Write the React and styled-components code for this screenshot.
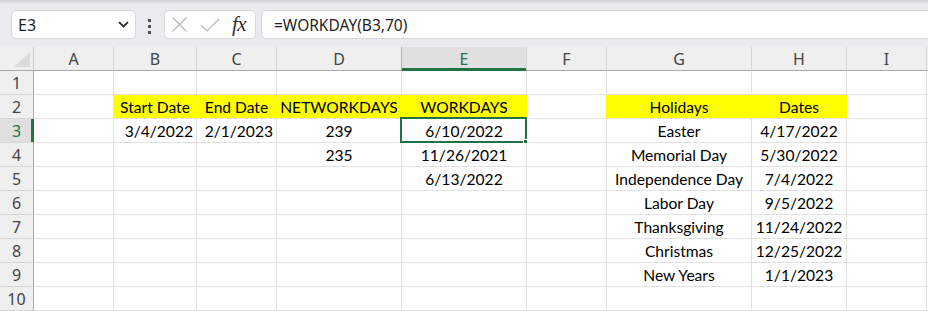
import React from 'react'
import styled, { createGlobalStyle } from 'styled-components'

const GlobalStyle = createGlobalStyle`
  body {
    margin: 0;
    background: #fff;
    overflow: hidden;
  }
`

const GREEN = '#217346'
const YELLOW = '#ffff00'
const UI_FONT = `"Noto Sans", "Open Sans", sans-serif`
const CELL_FONT = `Lato, "Noto Sans", sans-serif`

const Page = styled.div`
  width: 928px;
  height: 311px;
  overflow: hidden;
  display: flex;
  flex-direction: column;
`

const FormulaArea = styled.div`
  height: 48px;
  box-sizing: border-box;
  padding: 10px 0 0 11px;
  background: linear-gradient(#d4d6d9 0, #e9ebee 5px, #e9ebee 100%);
  display: flex;
  align-items: flex-start;
  overflow: hidden;
`

const NameBox = styled.div`
  width: 125px;
  height: 29px;
  box-sizing: border-box;
  background: #fff;
  border: 1px solid #d8d8d8;
  border-radius: 5px;
  padding: 0 6px 0 6px;
  display: flex;
  align-items: center;
  justify-content: space-between;
  font-family: ${UI_FONT};
  font-size: 16px;
  color: #1f1f1f;
`

const Dots = styled.div`
  width: 3px;
  margin: 9px 13px 0 12px;
  display: flex;
  flex-direction: column;
  gap: 3px;
`

const Dot = styled.span`
  width: 3px;
  height: 3px;
  background: #505050;
`

const FuncBox = styled.div`
  width: 92px;
  height: 29px;
  box-sizing: border-box;
  background: #fff;
  border: 1px solid #d8d8d8;
  border-radius: 5px;
  display: flex;
  align-items: center;
  padding-left: 6px;
  gap: 12px;
`

const Fx = styled.span`
  font-family: "Liberation Serif", serif;
  font-style: italic;
  font-size: 21px;
  color: #303030;
  letter-spacing: -0.5px;
`

const FormulaInput = styled.div`
  flex: 1;
  height: 29px;
  margin-left: 5px;
  margin-right: -10px;
  box-sizing: border-box;
  background: #fff;
  border: 1px solid #d8d8d8;
  border-radius: 5px;
  padding-left: 12px;
  display: flex;
  align-items: center;
  font-family: ${UI_FONT};
  font-size: 15.5px;
  color: #1f1f1f;
`

const Sheet = styled.div`
  display: grid;
  grid-template-columns: 34px 80px 83px 80px 125px 125px 80px 145px 95px 80px 1fr;
  grid-auto-rows: 24px;
`

const Corner = styled.div`
  position: relative;
  background: #efefef;
  border-right: 1px solid #c6c6c6;
  border-bottom: 1px solid #a9a9a9;
`

const CornerMark = styled.div`
  position: absolute;
  right: 3px;
  bottom: 3px;
  width: 16px;
  height: 15px;
  background: #dadada;
  clip-path: polygon(100% 0, 100% 100%, 0 100%);
`

const ColHead = styled.div`
  background: ${p => (p.$active ? '#e0e0e0' : '#efefef')};
  border-right: 1px solid #d6d6d6;
  border-left: ${p => (p.$active ? '1px solid #b4b4b4' : 'none')};
  margin-left: ${p => (p.$active ? '-1px' : '0')};
  border-bottom: 1px solid ${p => (p.$active ? GREEN : '#a9a9a9')};
  box-shadow: ${p => (p.$active ? `inset 0 -2px 0 ${GREEN}` : 'none')};
  display: flex;
  align-items: center;
  justify-content: center;
  font-family: ${UI_FONT};
  font-size: 16px;
  color: ${p => (p.$active ? GREEN : '#444')};
`

const RowHead = styled.div`
  background: ${p => (p.$active ? '#e0e0e0' : '#efefef')};
  border-right: 1px solid ${p => (p.$active ? GREEN : '#a9a9a9')};
  box-shadow: ${p => (p.$active ? `inset -2px 0 0 ${GREEN}` : 'none')};
  border-bottom: 1px solid #d6d6d6;
  display: flex;
  align-items: center;
  justify-content: center;
  font-family: ${UI_FONT};
  font-size: 16px;
  color: ${p => (p.$active ? GREEN : '#444')};
`

const Cell = styled.div`
  position: relative;
  box-sizing: border-box;
  background: ${p => (p.$fill ? YELLOW : '#fff')};
  border-right: 1px solid ${p => (p.$edge ? YELLOW : '#e1e1e1')};
  border-bottom: 1px solid #e1e1e1;
  padding: 0 3px 1px 3px;
  display: flex;
  align-items: flex-end;
  justify-content: ${p => (p.$align === 'right' ? 'flex-end' : p.$align === 'center' ? 'center' : 'flex-start')};
  font-family: ${CELL_FONT};
  font-size: 15.6px;
  line-height: 19px;
  color: #000;
  white-space: nowrap;
`

const Selection = styled.div`
  position: absolute;
  left: -2px;
  top: -2px;
  right: -1px;
  bottom: -1px;
  border: 2px solid ${GREEN};
  pointer-events: none;
`

const Handle = styled.div`
  position: absolute;
  right: -5px;
  bottom: -5px;
  width: 5px;
  height: 5px;
  background: ${GREEN};
  border: 1px solid #fff;
`

const COLS = ['A', 'B', 'C', 'D', 'E', 'F', 'G', 'H', 'I']

// one entry per row: column letter -> [text, align, filled]
const DATA = {
  2: {
    B: ['Start Date', 'center', true],
    C: ['End Date', 'center', true],
    D: ['NETWORKDAYS', 'center', true],
    E: ['WORKDAYS', 'center', true],
    G: ['Holidays', 'center', true],
    H: ['Dates', 'center', true],
  },
  3: {
    B: ['3/4/2022', 'right'],
    C: ['2/1/2023', 'right'],
    D: ['239', 'center'],
    E: ['6/10/2022', 'center'],
    G: ['Easter', 'center'],
    H: ['4/17/2022', 'center'],
  },
  4: {
    D: ['235', 'center'],
    E: ['11/26/2021', 'center'],
    G: ['Memorial Day', 'center'],
    H: ['5/30/2022', 'center'],
  },
  5: {
    E: ['6/13/2022', 'center'],
    G: ['Independence Day', 'center'],
    H: ['7/4/2022', 'center'],
  },
  6: { G: ['Labor Day', 'center'], H: ['9/5/2022', 'center'] },
  7: { G: ['Thanksgiving', 'center'], H: ['11/24/2022', 'center'] },
  8: { G: ['Christmas', 'center'], H: ['12/25/2022', 'center'] },
  9: { G: ['New Years', 'center'], H: ['1/1/2023', 'center'] },
}

const Chevron = () => (
  <svg width="11" height="7" viewBox="0 0 11 7">
    <path d="M1 1.2 L5.5 5.5 L10 1.2" fill="none" stroke="#2b2b2b" strokeWidth="1.8" />
  </svg>
)

const CancelIcon = () => (
  <svg width="17" height="17" viewBox="0 0 17 17">
    <path d="M1.5 1.5 L15.5 15.5 M15.5 1.5 L1.5 15.5" stroke="#b8b8b8" strokeWidth="1.2" fill="none" />
  </svg>
)

const EnterIcon = () => (
  <svg width="20" height="14" viewBox="0 0 20 14">
    <path d="M1 7 L7 13 L19 1" stroke="#b8b8b8" strokeWidth="1.2" fill="none" />
  </svg>
)

const Row = ({ n }) => {
  const row = DATA[n] || {}
  return (
    <>
      <RowHead $active={n === 3}>{n}</RowHead>
      {COLS.map((c, i) => {
        const [text, align, fill] = row[c] || []
        const next = row[COLS[i + 1]]
        const edge = fill || (next && next[2])
        return (
          <Cell key={c} $fill={fill} $edge={edge} $align={align}>
            {text}
            {n === 3 && c === 'E' && (
              <Selection>
                <Handle />
              </Selection>
            )}
          </Cell>
        )
      })}
      <Cell />
    </>
  )
}

export default function App() {
  const rows = Array.from({ length: 10 }, (_, i) => i + 1)
  return (
    <Page>
      <GlobalStyle />
      <FormulaArea>
        <NameBox>
          <span>E3</span>
          <Chevron />
        </NameBox>
        <Dots>
          <Dot />
          <Dot />
          <Dot />
        </Dots>
        <FuncBox>
          <CancelIcon />
          <EnterIcon />
          <Fx>fx</Fx>
        </FuncBox>
        <FormulaInput>=WORKDAY(B3,70)</FormulaInput>
      </FormulaArea>
      <Sheet>
        <Corner>
          <CornerMark />
        </Corner>
        {COLS.map(c => (
          <ColHead key={c} $active={c === 'E'}>{c}</ColHead>
        ))}
        <ColHead />
        {rows.map(n => (
          <Row key={n} n={n} />
        ))}
      </Sheet>
    </Page>
  )
}
